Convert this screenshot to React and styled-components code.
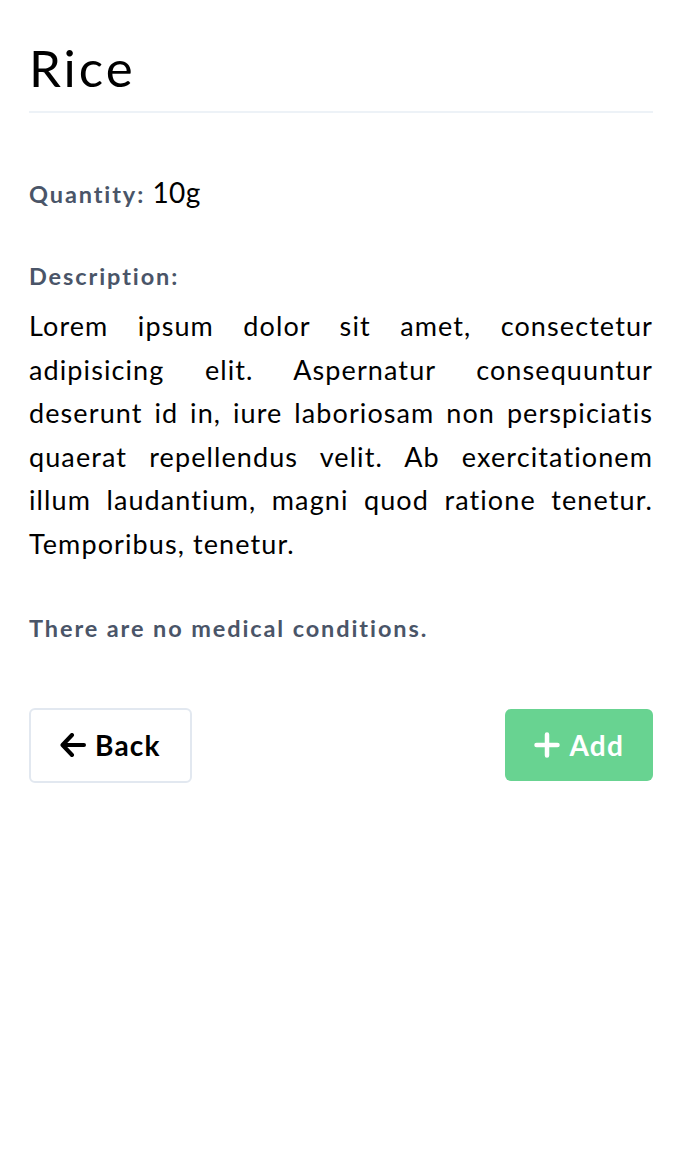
import React from "react";
import styled, { createGlobalStyle } from "styled-components";

const GlobalStyle = createGlobalStyle`
  body {
    margin: 0;
    background: #ffffff;
    font-family: "Lato", "Noto Sans", sans-serif;
    color: #000000;
  }
`;

const Page = styled.div`
  display: flex;
  flex-direction: column;
  padding: 38px 29px 0;
`;

const Title = styled.h1`
  margin: 0;
  font-size: 51px;
  font-weight: 400;
  letter-spacing: 3px;
  line-height: 60px;
  padding-bottom: 13px;
  border-bottom: 2px solid #edf2f7;
`;

const InfoLine = styled.p`
  margin: ${(p) => p.$top}px 0 0;
  font-size: 28px;
  letter-spacing: 0.3px;
  line-height: 32px;
`;

const Label = styled.span`
  font-size: 23.5px;
  font-weight: 700;
  letter-spacing: 1.9px;
  color: #4a5568;
`;

const Description = styled.p`
  margin: 12px 0 0;
  font-size: 27px;
  letter-spacing: 1.1px;
  line-height: 43.6px;
  text-align: justify;
`;

const Actions = styled.div`
  display: flex;
  justify-content: space-between;
  align-items: center;
  margin-top: 64px;
`;

const Button = styled.button`
  display: flex;
  align-items: center;
  gap: 9px;
  box-sizing: border-box;
  height: ${(p) => (p.$primary ? 72 : 75)}px;
  padding: 0 29px;
  border: ${(p) => (p.$primary ? "none" : "2px solid #e2e8f0")};
  border-radius: 6px;
  background: ${(p) => (p.$primary ? "#68d391" : "#ffffff")};
  color: ${(p) => (p.$primary ? "#ffffff" : "#000000")};
  font-family: "Lato", "Noto Sans", sans-serif;
  font-size: 28px;
  font-weight: 700;
  letter-spacing: 1.2px;
  cursor: pointer;
`;

const ArrowIcon = () => (
  <svg width="26" height="24" viewBox="0 0 26 24" fill="none">
    <path
      d="M24 12H3M12 2L2.5 12L12 22"
      stroke="currentColor"
      strokeWidth="4"
      strokeLinecap="round"
      strokeLinejoin="round"
    />
  </svg>
);

const PlusIcon = () => (
  <svg width="26" height="26" viewBox="0 0 26 26" fill="none">
    <path
      d="M13 2.5V23.5M2.5 13H23.5"
      stroke="currentColor"
      strokeWidth="4.5"
      strokeLinecap="round"
    />
  </svg>
);

export default function App() {
  return (
    <>
      <GlobalStyle />
      <Page>
        <Title>Rice</Title>
        <InfoLine $top={63}>
          <Label>Quantity:</Label> 10g
        </InfoLine>
        <InfoLine $top={48}>
          <Label>Description:</Label>
        </InfoLine>
        <Description>
          Lorem ipsum dolor sit amet, consectetur adipisicing elit. Aspernatur
          consequuntur deserunt id in, iure laboriosam non perspiciatis quaerat
          repellendus velit. Ab exercitationem illum laudantium, magni quod
          ratione tenetur. Temporibus, tenetur.
        </Description>
        <InfoLine $top={44}>
          <Label>There are no medical conditions.</Label>
        </InfoLine>
        <Actions>
          <Button>
            <ArrowIcon />
            Back
          </Button>
          <Button $primary>
            <PlusIcon />
            Add
          </Button>
        </Actions>
      </Page>
    </>
  );
}
